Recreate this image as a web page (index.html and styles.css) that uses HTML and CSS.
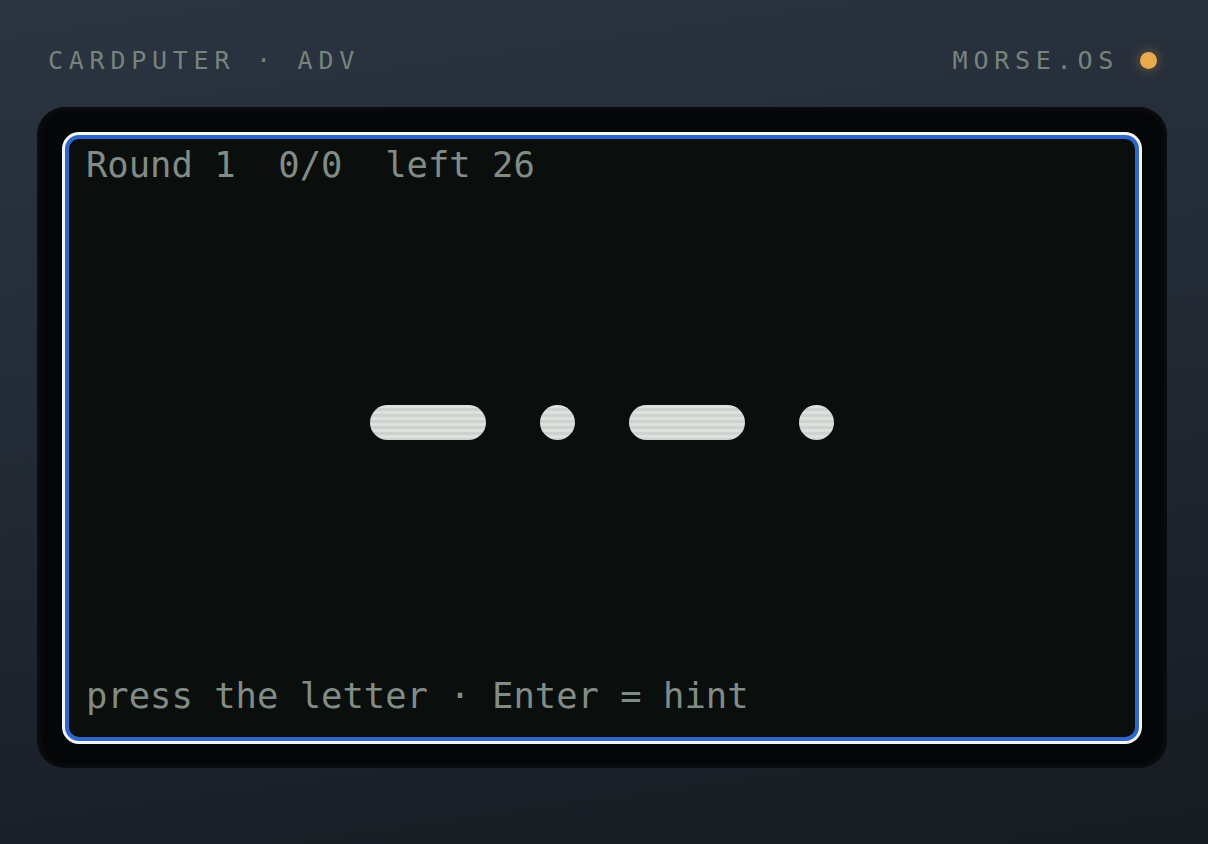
FILE: index.html
```html
<!DOCTYPE html>
<html>
<head>
<meta charset="utf-8">
<link rel="stylesheet" href="styles.css">
</head>
<body>
<div class="device">
  <header class="top">
    <span class="label">CARDPUTER · ADV</span>
    <span class="status"><span class="label">MORSE.OS</span><span class="led"></span></span>
  </header>
  <div class="bezel">
    <div class="screen">
      <div class="line">Round 1  0/0  left 26</div>
      <div class="morse">
        <span class="sym dash"></span>
        <span class="sym dot"></span>
        <span class="sym dash"></span>
        <span class="sym dot"></span>
      </div>
      <div class="line">press the letter · Enter = hint</div>
    </div>
  </div>
</div>
</body>
</html>
```
FILE: styles.css
```css
html, body {
  margin: 0;
  height: 100%;
}
body {
  width: 1208px;
  height: 844px;
  overflow: hidden;
  background: linear-gradient(172deg, #2b3441 0%, #222a35 45%, #171b22 100%);
  font-family: "DejaVu Sans Mono", "Liberation Mono", monospace;
}
.device {
  padding: 40px 41px 0 37px;
}
.top {
  height: 40px;
  display: flex;
  align-items: center;
  justify-content: space-between;
  padding: 0 10px 0 11px;
  margin-bottom: 27px;
}
.label {
  font-size: 25px;
  letter-spacing: 5.75px;
  color: #77837d;
  white-space: pre;
}
.status {
  display: flex;
  align-items: center;
  gap: 21px;
}
.led {
  width: 17px;
  height: 17px;
  border-radius: 50%;
  background: #e9a94d;
  box-shadow: 0 0 10px 3px rgba(233, 169, 77, 0.22);
}
.bezel {
  width: 1130px;
  height: 661px;
  box-sizing: border-box;
  padding: 28px 28px 27px 28px;
  background: #050607;
  border-radius: 28px;
  box-shadow: inset 0 0 6px 2px rgba(18, 21, 25, 0.7);
}
.screen {
  box-sizing: border-box;
  height: 100%;
  border: 4px solid #2f66c9;
  border-radius: 14px;
  box-shadow: 0 0 0 3px #f3f5f7;
  background: #0a0e0d;
  padding: 5px 14px 19px 17px;
  display: flex;
  flex-direction: column;
}
.line {
  font-size: 35.5px;
  line-height: 1.2;
  color: #828c86;
  white-space: pre;
}
.morse {
  flex: 1;
  display: flex;
  align-items: center;
  justify-content: center;
  gap: 54px;
  padding-bottom: 18px;
  padding-right: 3px;
}
.sym {
  height: 35px;
  border-radius: 18px;
  background: repeating-linear-gradient(180deg, #dde2de 0, #dde2de 3px, #cdd3ce 3px, #cdd3ce 6px);
}
.dash { width: 116px; }
.dot { width: 35px; }
```
